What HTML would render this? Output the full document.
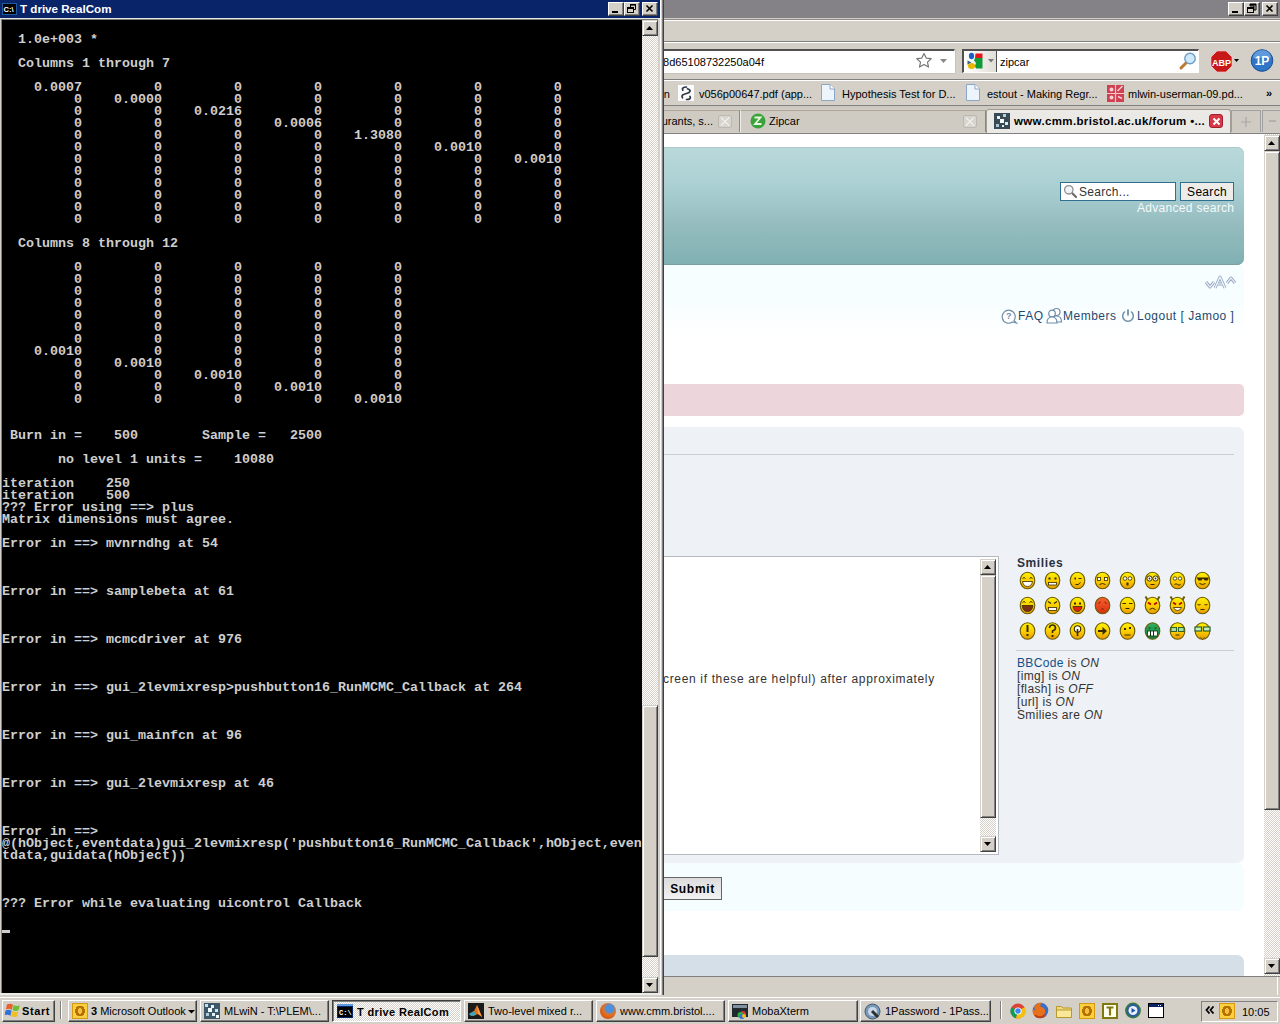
<!DOCTYPE html>
<html><head><meta charset="utf-8">
<style>
*{margin:0;padding:0;box-sizing:border-box}
html,body{width:1280px;height:1024px;overflow:hidden;background:#3a6ea5;font-family:"Liberation Sans",sans-serif}
.abs{position:absolute}
/* browser */
#br{position:absolute;left:0;top:0;width:1280px;height:995px;background:#d4d0c8}
#br .title{position:absolute;left:0;top:0;width:880px;height:18px;background:#808080}
/* console */
#con{position:absolute;left:0;top:0;width:664px;height:996px;background:#d4d0c8}
#con .title{position:absolute;left:0;top:0;width:660px;height:18px;background:#0a246a}
#con .ttext{position:absolute;left:20px;top:2px;font:bold 11.6px "Liberation Sans",sans-serif;color:#fff;line-height:14px}
.wbtn{position:absolute;top:2px;width:16px;height:14px;background:#d4d0c8;border-top:1px solid #fff;border-left:1px solid #fff;border-right:1px solid #404040;border-bottom:1px solid #404040;box-shadow:inset -1px -1px 0 #808080}
#screen{position:absolute;left:2px;top:20px;width:640px;height:973px;background:#000;overflow:hidden}
#screen pre{position:absolute;left:0;top:2px;font:bold 13.333px/12px "Liberation Mono",monospace;color:#cecece;white-space:pre}
.sb{position:absolute;background-color:#f4f3ee;background-image:repeating-conic-gradient(#d4d0c8 0 25%,#fff 0 50%);background-size:2px 2px}
.sbb{position:absolute;width:16px;height:16px;background:#d4d0c8;border-top:1px solid #d4d0c8;border-left:1px solid #d4d0c8;border-right:1px solid #404040;border-bottom:1px solid #404040;box-shadow:inset 1px 1px 0 #fff,inset -1px -1px 0 #808080}
/* taskbar */
#tb{position:absolute;left:0;top:995px;width:1280px;height:29px;background:#d4d0c8}
.tbtn{position:absolute;top:5px;height:22px;background:#d4d0c8;border-top:1px solid #fff;border-left:1px solid #fff;border-right:1px solid #404040;border-bottom:1px solid #404040;box-shadow:inset -1px -1px 0 #808080;font:11px/14px "Liberation Sans",sans-serif;color:#000;white-space:nowrap;overflow:hidden}
.bm{font:11px/14px "Liberation Sans",sans-serif;color:#000;white-space:nowrap}
.tab{top:110px;height:22px;background:#cfcbc3;border-top:1px solid #a8a49c;border-left:1px solid #f0eeea;border-right:1px solid #8c8880;font:11px/14px "Liberation Sans",sans-serif;color:#000;white-space:nowrap}
.tabsel{top:109px;height:25px;background:#ebe9e5;border:1px solid #a09c94;border-bottom:none;border-radius:3px 3px 0 0;font:11px/14px "Liberation Sans",sans-serif;color:#000;white-space:nowrap}
.tclose{position:absolute;top:4px;width:14px;height:13px;border:1px solid #bdb9b1;border-radius:2px;background:#d8d5ce}
.tclose::after{content:"";position:absolute;left:2px;top:1px;width:8px;height:9px;background:linear-gradient(45deg,transparent 42%,#eeece8 42%,#eeece8 58%,transparent 58%),linear-gradient(-45deg,transparent 42%,#eeece8 42%,#eeece8 58%,transparent 58%)}
.nav{font:12px/16px "Liberation Sans",sans-serif;color:#1f4a6e;white-space:nowrap;letter-spacing:.5px}
.tbtn.sel{background-color:#eae8e4;background-image:repeating-conic-gradient(#d4d0c8 0 25%,#fff 0 50%);background-size:2px 2px;border-top:1px solid #404040;border-left:1px solid #404040;border-right:1px solid #fff;border-bottom:1px solid #fff;box-shadow:inset 1px 1px 0 #808080}
.ol{width:16px;height:16px;background:radial-gradient(ellipse 45% 50% at 50% 50%,#f0c040 0 38%,#b87000 40% 75%,#f8d040 78%),linear-gradient(#fbe070,#e8a810);border:1px solid #d89810}
.ff{width:16px;height:16px;border-radius:50%;background:radial-gradient(circle at 60% 35%,#4a90e0 0 25%,#e8701a 45%,#b84010 100%)}
</style></head><body>

<div id="br">
  <div class="abs" style="left:0;top:0;width:1280px;height:18px;background:#848187"></div>
  <div class="wbtn" style="left:1228px"><svg width="14" height="12" class="abs" style="left:0;top:0"><rect x="3" y="8" width="6" height="2" fill="#000"/></svg></div>
  <div class="wbtn" style="left:1244px"><svg width="14" height="12" class="abs" style="left:0;top:0"><path d="M5 1h6v6h-2M5 1v2h4v4" fill="none" stroke="#000" stroke-width="1"/><rect x="5" y="1" width="6" height="1.6" fill="#000"/><rect x="2.5" y="4.5" width="6" height="5" fill="none" stroke="#000"/><rect x="2" y="4" width="7" height="2" fill="#000"/></svg></div>
  <div class="wbtn" style="left:1262px"><svg width="14" height="12" class="abs" style="left:0;top:0"><path d="M3.5 2.5l6 6M9.5 2.5l-6 6" stroke="#000" stroke-width="1.6"/></svg></div>
  <div class="abs" style="left:0;top:18px;width:1280px;height:1px;background:#d4d0c8"></div>
  <div class="abs" style="left:0;top:19px;width:1280px;height:1px;background:#8c8986"></div>
  <div class="abs" style="left:0;top:20px;width:1280px;height:1px;background:#fff"></div>
  <div class="abs" style="left:0;top:41px;width:1280px;height:1px;background:#808080"></div>
  <div class="abs" style="left:0;top:42px;width:1280px;height:1px;background:#fff"></div>
  <!-- url bar -->
  <div class="abs" style="left:600px;top:49px;width:355px;height:24px;background:#fff;border-top:2px solid #505050;border-bottom:1px solid #fff;border-right:1px solid #fff;box-shadow:0 1px 0 #c8c4bc,1px 0 0 #c8c4bc"></div>
  <div class="abs" style="left:400px;top:55px;font:11px/14px 'Liberation Sans',sans-serif;color:#000;width:364px;text-align:right">t=7ba6c63d06e1bb8d65108732250a04f</div>
  <svg class="abs" style="left:915px;top:52px" width="18" height="18"><path d="M9 1.5l2.2 4.6 5 .6-3.7 3.4 1 5-4.5-2.5-4.5 2.5 1-5L1.8 6.7l5-.6z" fill="#fff" stroke="#777" stroke-width="1.2" stroke-linejoin="round"/></svg>
  <svg class="abs" style="left:940px;top:59px" width="8" height="5"><path d="M0 0h7l-3.5 4z" fill="#888"/></svg>
  <!-- search bar -->
  <div class="abs" style="left:962px;top:49px;width:237px;height:24px;background:#fff;border-top:2px solid #505050;border-left:2px solid #505050;border-bottom:1px solid #fff;border-right:1px solid #fff"></div>
  <div class="abs" style="left:964px;top:51px;width:33px;height:21px;background:linear-gradient(90deg,#fff,#e0ded8);border-right:1px solid #505050"></div>
  <svg class="abs" style="left:966px;top:52px" width="20" height="18"><ellipse cx="5.5" cy="4" rx="2.6" ry="3.3" fill="#1a5fc8"/><path d="M1.5 8.5l4 2-4 2.2z" fill="#2d5f8a"/><ellipse cx="5.5" cy="14" rx="3.6" ry="3" fill="#e8b800"/><path d="M9.5 1.5h7v4.5h-7.5z" fill="#e8141c"/><path d="M9 6h7.5v10.5h-6.5l-1-2.5 1-3-2-2.5z" fill="#0e9a36"/></svg>
  <svg class="abs" style="left:988px;top:59px" width="7" height="5"><path d="M0 0h6l-3 3.5z" fill="#777"/></svg>
  <div class="abs" style="left:1000px;top:55px;font:11px/14px 'Liberation Sans',sans-serif;color:#000">zipcar</div>
  <svg class="abs" style="left:1178px;top:51px" width="20" height="20"><path d="M3 17l5-5" stroke="#c07830" stroke-width="3" stroke-linecap="round"/><circle cx="12" cy="7.5" r="5.2" fill="#cfe8fa" stroke="#6d9cc4" stroke-width="1.4"/></svg>
  <!-- ABP + 1P -->
  <svg class="abs" style="left:1210px;top:50px" width="23" height="23"><path d="M7 .8h9l6.2 6.2v9L16 22.2H7L.8 16V7z" fill="#c81818" stroke="#f0d8d8" stroke-width="1"/><text x="11.5" y="15.5" text-anchor="middle" font-family="Liberation Sans" font-weight="bold" font-size="9" fill="#fff">ABP</text></svg>
  <svg class="abs" style="left:1234px;top:59px" width="6" height="4"><path d="M0 0h5l-2.5 3z" fill="#000"/></svg>
  <svg class="abs" style="left:1250px;top:49px" width="24" height="23"><circle cx="12" cy="11.5" r="10.8" fill="#2f76c8" stroke="#1b4f94" stroke-width="1"/><path d="M3 9a9 8 0 0 1 18 0z" fill="#7fb3ea" opacity=".6"/><text x="12" y="16" text-anchor="middle" font-family="Liberation Sans" font-weight="bold" font-size="12" fill="#fff">1P</text></svg>
  <div class="abs" style="left:0;top:79px;width:1280px;height:1px;background:#808080"></div>
  <div class="abs" style="left:0;top:80px;width:1280px;height:1px;background:#fff"></div>
  <!-- bookmarks -->
  <div class="abs bm" style="left:500px;top:87px;width:170px;text-align:right">Summary Statistics Design</div>
  <svg class="abs" style="left:678px;top:85px" width="16" height="16"><rect width="16" height="16" fill="#fbfcfe"/><path d="M8.5 2C5.5 2 3.5 3.2 4.8 5.2M9.5 3.8C13.5 5 12.5 7.5 8.5 8.5S3 10.5 4.5 12.8M8.5 14.5C12 14.5 13 13 12 11.5" fill="none" stroke="#2c3440" stroke-width="1.7" stroke-linecap="round"/></svg>
  <div class="abs bm" style="left:699px;top:87px">v056p00647.pdf (app...</div>
  <svg class="abs" style="left:821px;top:84px" width="14" height="17"><path d="M.5 .5h8.5l4.5 4.5v11.5H.5z" fill="#eef4fc" stroke="#8aa6c8"/><path d="M9 .5v4.5h4.5" fill="#fff" stroke="#8aa6c8"/></svg>
  <div class="abs bm" style="left:842px;top:87px">Hypothesis Test for D...</div>
  <svg class="abs" style="left:966px;top:84px" width="14" height="17"><path d="M.5 .5h8.5l4.5 4.5v11.5H.5z" fill="#eef4fc" stroke="#8aa6c8"/><path d="M9 .5v4.5h4.5" fill="#fff" stroke="#8aa6c8"/></svg>
  <div class="abs bm" style="left:987px;top:87px">estout - Making Regr...</div>
  <svg class="abs" style="left:1107px;top:85px" width="17" height="17"><rect width="17" height="17" fill="#d04050"/><path d="M8.5 0v17M0 8.5h17" stroke="#f4c8cc" stroke-width="1.2"/><circle cx="4.5" cy="4.5" r="2" fill="#f6d0d4"/><circle cx="4.5" cy="12.5" r="2" fill="#f6d0d4"/><path d="M10.5 6l5-5M11 11.5l4 2" stroke="#f6d0d4" stroke-width="1.5"/></svg>
  <div class="abs bm" style="left:1128px;top:87px">mlwin-userman-09.pd...</div>
  <div class="abs" style="left:1266px;top:86px;font:bold 11px/14px 'Liberation Sans',sans-serif;color:#000">&#187;</div>
  <div class="abs" style="left:0;top:105px;width:1280px;height:1px;background:#808080"></div>
  <div class="abs" style="left:0;top:106px;width:1280px;height:3px;background:#cdc9c1"></div>
  <!-- tabs -->
  <div class="abs tab" style="left:500px;width:240px"><span style="position:absolute;right:26px;top:3px">Restaurants, s...</span><div class="tclose" style="left:217px"></div></div>
  <div class="abs tab" style="left:740px;width:246px"><svg class="abs" style="left:9px;top:2px" width="16" height="16"><circle cx="8" cy="8" r="7.5" fill="#3aa43a"/><path d="M4.5 4.5h6l-5.5 6.5h6.5" fill="none" stroke="#e8f8e0" stroke-width="1.8"/></svg><span style="position:absolute;left:28px;top:3px">Zipcar</span><div class="tclose" style="left:222px"></div></div>
  <div class="abs tabsel" style="left:986px;width:245px"><svg class="abs" style="left:7px;top:3px" width="16" height="16"><rect width="16" height="16" fill="#3a4a54"/><rect x="3" y="3" width="3" height="3" fill="#e8f4f8"/><rect x="9" y="1" width="3" height="3" fill="#b8d0dc"/><rect x="6" y="6" width="4" height="4" fill="#f4fcff"/><rect x="11" y="9" width="3" height="3" fill="#d8ecf4"/><rect x="2" y="11" width="3" height="3" fill="#a8c4d4"/><rect x="8" y="12" width="2" height="2" fill="#e0f0f8"/></svg><span style="position:absolute;left:27px;top:4px;font-weight:bold;font-size:11.5px;letter-spacing:.35px">www.cmm.bristol.ac.uk/forum &#8226;...</span><div class="abs" style="left:222px;top:4px;width:14px;height:14px;background:#d83848;border:1px solid #a02030;border-radius:3px"><svg class="abs" style="left:2px;top:2px" width="10" height="10"><path d="M1.5 1.5l6 6M7.5 1.5l-6 6" stroke="#fff" stroke-width="2"/></svg></div></div>
  <div class="abs" style="left:1231px;top:110px;width:30px;height:22px;background:#cfcbc3;border:1px solid #a0a0a0;border-bottom:none"><svg class="abs" style="left:8px;top:5px" width="12" height="12"><path d="M6 1v10M1 6h10" stroke="#a8a8a8" stroke-width="1.2"/></svg></div>
  <div class="abs" style="left:1262px;top:110px;width:20px;height:22px;background:#cfcbc3;border:1px solid #a0a0a0;border-bottom:none"><svg class="abs" style="left:6px;top:9px" width="8" height="3"><path d="M0 1h7" stroke="#a0a0a0" stroke-width="1.2"/></svg></div>
  <div class="abs" style="left:0;top:133px;width:1280px;height:1px;background:#808080"></div>
  <!-- content -->
  <div class="abs" style="left:0;top:134px;width:1264px;height:842px;background:#fff;overflow:hidden" id="page"></div>
  <!-- header -->
  <div class="abs" style="left:400px;top:147px;width:844px;height:118px;border-radius:7px;background:linear-gradient(#b9d8da 0%,#afd3d5 25%,#a4c9cd 45%,#95bcbe 65%,#89b6b8 85%,#7fb0b2 100%);box-shadow:inset 0 1px 0 #b0cacc,inset 0 -1px 0 #7aa0a2"></div>
  <div class="abs" style="left:1060px;top:182px;width:116px;height:19px;background:#fff;border:1px solid #2f6f8f"></div>
  <svg class="abs" style="left:1063px;top:184px" width="15" height="15"><path d="M8.5 8.5l4.5 4.5" stroke="#707070" stroke-width="2.4" stroke-linecap="round"/><circle cx="5.8" cy="5.8" r="4.2" fill="#f0f4f8" stroke="#909090" stroke-width="1.3"/></svg>
  <div class="abs" style="left:1079px;top:185px;font:12px/14px 'Liberation Sans',sans-serif;color:#333;letter-spacing:.3px">Search...</div>
  <div class="abs" style="left:1180px;top:182px;width:54px;height:19px;background:#eeece8;border:1px solid #2f6f8f;font:12px/18px 'Liberation Sans',sans-serif;color:#000;text-align:center;letter-spacing:.3px">Search</div>
  <div class="abs" style="left:1137px;top:201px;font:12px/14px 'Liberation Sans',sans-serif;color:#f4fafa;letter-spacing:.3px">Advanced search</div>
  <!-- navbar -->
  <div class="abs" style="left:400px;top:265px;width:844px;height:70px;background:linear-gradient(#f6feff,#f8feff 60%,#fff)"></div>
  <svg class="abs" style="left:1200px;top:272px" width="40" height="20"><g fill="none" stroke="#98aac4" stroke-width="3" stroke-linejoin="round"><path d="M6 10l4 5 4-5M15 16l5-11 5 11M17.5 12h5M27 11l4-5 4 5"/></g><g fill="none" stroke="#f4f8fc" stroke-width="1.2" stroke-linejoin="round"><path d="M6 10l4 5 4-5M15 16l5-11 5 11M17.5 12h5M27 11l4-5 4 5"/></g></svg>
  <svg class="abs" style="left:1001px;top:307px" width="17" height="17"><path d="M13 13.5l2.5 2.5-4-1A6.5 6.5 0 1 1 13 13.5z" fill="#fff" stroke="#6f8ea8" stroke-width="1.2"/><text x="7.8" y="11.5" text-anchor="middle" font-family="Liberation Sans" font-weight="bold" font-size="9" fill="#6f8ea8">?</text></svg>
  <div class="abs nav" style="left:1018px;top:308px">FAQ</div>
  <svg class="abs" style="left:1046px;top:307px" width="17" height="17"><circle cx="10.5" cy="5" r="3.5" fill="#fff" stroke="#6f8ea8" stroke-width="1.2"/><path d="M5.5 15c0-4 2-6 5-6s5 2 5 6z" fill="#fff" stroke="#6f8ea8" stroke-width="1.2"/><circle cx="6" cy="6.5" r="3.3" fill="#fff" stroke="#6f8ea8" stroke-width="1.2"/><path d="M1 16c0-4 2-6 5-6s5 2 5 6z" fill="#fff" stroke="#6f8ea8" stroke-width="1.2"/></svg>
  <div class="abs nav" style="left:1063px;top:308px">Members</div>
  <svg class="abs" style="left:1121px;top:308px" width="14" height="15"><path d="M4 3.5A5.3 5.3 0 1 0 10 3.5" fill="none" stroke="#6f8ea8" stroke-width="1.5"/><path d="M7 1.5v6" stroke="#6f8ea8" stroke-width="1.8"/></svg>
  <div class="abs nav" style="left:1137px;top:308px">Logout [ Jamoo ]</div>
  <!-- pink bar -->
  <div class="abs" style="left:400px;top:384px;width:844px;height:32px;border-radius:5px;background:#ecd6dc"></div>
  <!-- panel -->
  <div class="abs" style="left:400px;top:427px;width:844px;height:436px;border-radius:7px;background:#eef1f5"></div>
  <div class="abs" style="left:400px;top:454px;width:834px;height:1px;background:#c9ced4"></div>
  <!-- textarea -->
  <div class="abs" style="left:400px;top:556px;width:599px;height:299px;background:#fff;border:1px solid #b4bac0"></div>
  <div class="abs" style="left:663px;top:672px;font:12px/14px 'Liberation Sans',sans-serif;color:#333;letter-spacing:.66px">creen if these are helpful) after approximately</div>
  <div class="sb" style="left:980px;top:559px;width:16px;height:293px"></div>
  <div class="sbb" style="left:980px;top:559px"><svg class="abs" style="left:3px;top:5px" width="8" height="5"><path d="M0 4h7L3.5 0z" fill="#000"/></svg></div>
  <div class="sbb" style="left:980px;top:575px;height:243px"></div>
  <div class="sbb" style="left:980px;top:836px"><svg class="abs" style="left:3px;top:5px" width="8" height="5"><path d="M0 0h7L3.5 4z" fill="#000"/></svg></div>
  <!-- smilies -->
  <div class="abs" style="left:1017px;top:556px;font:bold 12px/14px 'Liberation Sans',sans-serif;color:#28313f;letter-spacing:.6px">Smilies</div>
  <svg class="abs" style="left:1015px;top:565px" width="200" height="80"><defs><linearGradient id="yg" x1="0" y1="0" x2="0" y2="1"><stop offset="0" stop-color="#fff200"/><stop offset=".6" stop-color="#f8c800"/><stop offset="1" stop-color="#e89800"/></linearGradient><linearGradient id="rg" x1="0" y1="0" x2="0" y2="1"><stop offset="0" stop-color="#f86030"/><stop offset="1" stop-color="#d83010"/></linearGradient><linearGradient id="gg" x1="0" y1="0" x2="0" y2="1"><stop offset="0" stop-color="#30b060"/><stop offset="1" stop-color="#108040"/></linearGradient></defs><ellipse cx="12.5" cy="15.5" rx="7.3" ry="8.2" fill="url(#yg)" stroke="#6a5a00" stroke-width="1.1"/><path d="M7.5 13.5q1.5-2 3 0M14.5 13.5q1.5-2 3 0" stroke="#3a2a00" fill="none"/><path d="M7.5 16.5h10q-1 5-5 5t-5-5z" fill="#fff" stroke="#3a2a00" stroke-width=".8"/><ellipse cx="37.5" cy="15.5" rx="7.3" ry="8.2" fill="url(#yg)" stroke="#6a5a00" stroke-width="1.1"/><rect x="33.5" y="12.5" width="2" height="2" fill="#3a2a00"/><rect x="39.5" y="12.5" width="2" height="2" fill="#3a2a00"/><rect x="33.5" y="17.5" width="8" height="2.5" fill="#fff" stroke="#3a2a00" stroke-width=".8"/><ellipse cx="62.5" cy="15.5" rx="7.3" ry="8.2" fill="url(#yg)" stroke="#6a5a00" stroke-width="1.1"/><rect x="59.5" y="12.5" width="1.5" height="2" fill="#3a2a00"/><path d="M63.5 13.5h3M60.5 19.5q3 1 5-2" stroke="#3a2a00" fill="none"/><ellipse cx="87.5" cy="15.5" rx="7.3" ry="8.2" fill="url(#yg)" stroke="#6a5a00" stroke-width="1.1"/><rect x="82.5" y="12.5" width="3" height="3" fill="#fff" stroke="#3a2a00" stroke-width=".8"/><rect x="89.5" y="12.5" width="3" height="3" fill="#fff" stroke="#3a2a00" stroke-width=".8"/><path d="M84.5 19.5q3-2 6 0" stroke="#3a2a00" fill="none"/><ellipse cx="112.5" cy="15.5" rx="7.3" ry="8.2" fill="url(#yg)" stroke="#6a5a00" stroke-width="1.1"/><circle cx="110.0" cy="13.5" r="1.8" fill="#fff" stroke="#3a2a00" stroke-width=".8"/><circle cx="115.0" cy="13.5" r="1.8" fill="#fff" stroke="#3a2a00" stroke-width=".8"/><rect x="111.5" y="17.5" width="2" height="3" fill="#3a2a00"/><ellipse cx="137.5" cy="15.5" rx="7.3" ry="8.2" fill="url(#yg)" stroke="#6a5a00" stroke-width="1.1"/><circle cx="134.5" cy="13.5" r="2.6" fill="#fff" stroke="#3a2a00"/><circle cx="140.5" cy="13.5" r="2.6" fill="#fff" stroke="#3a2a00"/><circle cx="134.5" cy="13.5" r=".9" fill="#3a2a00"/><circle cx="140.5" cy="13.5" r=".9" fill="#3a2a00"/><path d="M135.5 19.5h4" stroke="#3a2a00"/><ellipse cx="162.5" cy="15.5" rx="7.3" ry="8.2" fill="url(#yg)" stroke="#6a5a00" stroke-width="1.1"/><circle cx="160.0" cy="13.5" r="1.7" fill="#fff" stroke="#3a2a00" stroke-width=".8"/><circle cx="165.0" cy="13.5" r="1.7" fill="#fff" stroke="#3a2a00" stroke-width=".8"/><path d="M159.5 19.5q1.5-1.5 3 0t3 0" stroke="#3a2a00" fill="none"/><ellipse cx="187.5" cy="15.5" rx="7.3" ry="8.2" fill="url(#yg)" stroke="#6a5a00" stroke-width="1.1"/><path d="M181.5 12.5h12v1.5l-1 1.5h-3l-1-1.5h-1l-1 1.5h-3l-1-1.5z" fill="#3a2a00"/><path d="M184.5 18.5q3 2 6 0" stroke="#3a2a00" fill="none"/><ellipse cx="12.5" cy="40.5" rx="7.3" ry="8.2" fill="url(#yg)" stroke="#6a5a00" stroke-width="1.1"/><path d="M7.5 37.5q1.5-2 3 0M14.5 37.5q1.5-2 3 0" stroke="#3a2a00" fill="none"/><path d="M7.0 40.5h11q-1 6-5.5 6t-5.5-6z" fill="#7a3018" stroke="#3a2a00" stroke-width=".8"/><ellipse cx="37.5" cy="40.5" rx="7.3" ry="8.2" fill="url(#yg)" stroke="#6a5a00" stroke-width="1.1"/><path d="M33.0 36.5l3 2M42.0 36.5l-3 2" stroke="#3a2a00" stroke-width="1.3"/><rect x="33.5" y="42.5" width="8" height="3" fill="#fff" stroke="#3a2a00" stroke-width=".8"/><ellipse cx="62.5" cy="40.5" rx="7.3" ry="8.2" fill="url(#yg)" stroke="#6a5a00" stroke-width="1.1"/><rect x="59.0" y="37.5" width="2" height="2" fill="#3a2a00"/><rect x="64.0" y="37.5" width="2" height="2" fill="#3a2a00"/><path d="M58.0 41.5h9q-1 5-4.5 5t-4.5-5z" fill="#e02010" stroke="#3a2a00" stroke-width=".8"/><ellipse cx="87.5" cy="40.5" rx="7.3" ry="8.2" fill="url(#rg)" stroke="#6a5a00" stroke-width="1.1"/><path d="M83.5 38.5l2-1.5M91.5 38.5l-2-1.5" stroke="#602000"/><rect x="86.5" y="43.5" width="2" height="1" fill="#602000"/><ellipse cx="112.5" cy="40.5" rx="7.3" ry="8.2" fill="url(#yg)" stroke="#6a5a00" stroke-width="1.1"/><path d="M107.5 38.5h3.5M114.0 38.5h3.5M110.5 43.5h4" stroke="#3a2a00"/><path d="M130.5 31.5l3 5M144.5 31.5l-3 5" stroke="#6a5a00" stroke-width="2"/><ellipse cx="137.5" cy="40.5" rx="7.3" ry="8.2" fill="url(#yg)" stroke="#6a5a00" stroke-width="1.1"/><path d="M133.0 37.5l3 2M142.0 37.5l-3 2" stroke="#c00000" stroke-width="1.6"/><path d="M134.5 44.5q3-2.5 6 0" stroke="#3a2a00" fill="none"/><path d="M155.5 31.5l3 5M169.5 31.5l-3 5" stroke="#6a5a00" stroke-width="2"/><ellipse cx="162.5" cy="40.5" rx="7.3" ry="8.2" fill="url(#yg)" stroke="#6a5a00" stroke-width="1.1"/><path d="M158.0 37.5l3 2M167.0 37.5l-3 2" stroke="#c00000" stroke-width="1.6"/><path d="M158.5 42.5h8q-1 3-4 3t-4-3z" fill="#fff" stroke="#3a2a00" stroke-width=".8"/><ellipse cx="187.5" cy="40.5" rx="7.3" ry="8.2" fill="url(#yg)" stroke="#6a5a00" stroke-width="1.1"/><path d="M182.5 39.5q1.5 1 3 0M189.5 39.5q1.5 1 3 0M185.5 44.5h4" stroke="#3a2a00" fill="none"/><ellipse cx="12.5" cy="66" rx="7.3" ry="8.2" fill="url(#yg)" stroke="#6a5a00" stroke-width="1.1"/><rect x="11.5" y="60" width="2" height="7" fill="#3a2a00"/><rect x="11.5" y="69" width="2" height="2" fill="#3a2a00"/><ellipse cx="37.5" cy="66" rx="7.3" ry="8.2" fill="url(#yg)" stroke="#6a5a00" stroke-width="1.1"/><path d="M34.5 63q0-3 3-3t3 3q0 2-3 3v2" stroke="#3a2a00" stroke-width="1.6" fill="none"/><rect x="36.5" y="70" width="2" height="2" fill="#3a2a00"/><ellipse cx="62.5" cy="66" rx="7.3" ry="8.2" fill="url(#yg)" stroke="#6a5a00" stroke-width="1.1"/><circle cx="62.5" cy="64" r="3.2" fill="#fff" stroke="#3a2a00" stroke-width="1.1"/><path d="M62.5 64v7" stroke="#3a2a00" stroke-width="1.6"/><ellipse cx="87.5" cy="66" rx="7.3" ry="8.2" fill="url(#yg)" stroke="#6a5a00" stroke-width="1.1"/><path d="M83.0 65h4.5v-3l4.5 4-4.5 4v-3h-4.5z" fill="#3a2a00"/><ellipse cx="112.5" cy="66" rx="7.3" ry="8.2" fill="url(#yg)" stroke="#6a5a00" stroke-width="1.1"/><rect x="109.0" y="63" width="2" height="2" fill="#3a2a00"/><rect x="114.0" y="62" width="2" height="2" fill="#3a2a00"/><path d="M109.5 70h6" stroke="#3a2a00"/><ellipse cx="137.5" cy="66" rx="7.3" ry="8.2" fill="url(#gg)" stroke="#6a5a00" stroke-width="1.1"/><rect x="132.5" y="66" width="10" height="5" fill="#fff" stroke="#103010" stroke-width=".8"/><path d="M135.5 66v5M138.5 66v5M133.5 63h2M139.5 63h2" stroke="#103010"/><ellipse cx="162.5" cy="66" rx="7.3" ry="8.2" fill="url(#yg)" stroke="#6a5a00" stroke-width="1.1"/><rect x="156.0" y="62.5" width="5.5" height="4" fill="#a0e0a0" stroke="#306030"/><rect x="163.5" y="62.5" width="5.5" height="4" fill="#a0e0a0" stroke="#306030"/><path d="M160.5 70h4" stroke="#3a2a00"/><ellipse cx="187.5" cy="66" rx="7.3" ry="8.2" fill="url(#yg)" stroke="#6a5a00" stroke-width="1.1"/><rect x="180.0" y="62" width="6.5" height="4" fill="#c0f0c0" stroke="#306030" stroke-width="1.2"/><rect x="188.5" y="62" width="6.5" height="4" fill="#c0f0c0" stroke="#306030" stroke-width="1.2"/><path d="M185.5 72l2 3 2-3" stroke="#806020" fill="none"/></svg>
  <div class="abs" style="left:1016px;top:650px;width:218px;height:1px;background:#c9ced4"></div>
  <div class="abs" style="left:1017px;top:657px;font:12px/13px 'Liberation Sans',sans-serif;color:#333;letter-spacing:.35px"><span style="color:#105289">BBCode</span> is <i>ON</i><br>[img] is <i>ON</i><br>[flash] is <i>OFF</i><br>[url] is <i>ON</i><br>Smilies are <i>ON</i></div>
  <!-- submit panel -->
  <div class="abs" style="left:400px;top:863px;width:844px;height:48px;border-radius:7px;background:#f5fdfe"></div>
  <div class="abs" style="left:400px;top:877px;width:322px;height:23px;background:linear-gradient(#dcdcdc,#f2f2f2);border:1px solid #666;font:bold 12px/23px 'Liberation Sans',sans-serif;color:#000;text-align:right;padding-right:6px;letter-spacing:.7px">Submit</div>
  <!-- bottom box -->
  <div class="abs" style="left:400px;top:955px;width:844px;height:40px;border-radius:7px;background:#d4dfe8"></div>
  <!-- page scrollbar -->
  <div class="sb" style="left:1264px;top:134px;width:16px;height:842px"></div>
  <div class="sbb" style="left:1264px;top:135px"><svg class="abs" style="left:3px;top:5px" width="8" height="5"><path d="M0 4h7L3.5 0z" fill="#000"/></svg></div>
  <div class="sbb" style="left:1264px;top:151px;height:659px"></div>
  <div class="sbb" style="left:1264px;top:958px"><svg class="abs" style="left:3px;top:5px" width="8" height="5"><path d="M0 0h7L3.5 4z" fill="#000"/></svg></div>
  <!-- status bar -->
  <div class="abs" style="left:0;top:976px;width:1280px;height:19px;background:#d4d0c8;border-top:1px solid #808080"></div>
  <div class="abs" style="left:1277px;top:977px;width:1px;height:18px;background:#fff"></div>
  <div class="abs" style="left:0;top:995px;width:1280px;height:1px;background:#fff"></div>
</div>

<div id="con">
  <div class="title">
    <svg class="abs" style="left:2px;top:3px" width="15" height="12"><rect x="0" y="0" width="15" height="12" fill="#1e5aa0"/><rect x="1" y="1" width="13" height="10" fill="#000"/><text x="1.5" y="9" font-family="Liberation Sans" font-weight="bold" font-size="7.5" fill="#fff">C:\</text></svg>
    <div class="ttext">T drive RealCom</div>
    <div class="wbtn" style="left:608px"><svg width="14" height="12" class="abs" style="left:0;top:0"><rect x="3" y="8" width="6" height="2" fill="#000"/></svg></div>
    <div class="wbtn" style="left:624px"><svg width="14" height="12" class="abs" style="left:0;top:0"><rect x="5" y="1" width="6" height="1.6" fill="#000"/><path d="M5.5 1v3M10.5 1v5.5H9" fill="none" stroke="#000"/><rect x="2.5" y="4.5" width="6" height="5" fill="none" stroke="#000"/><rect x="2" y="4" width="7" height="2" fill="#000"/></svg></div>
    <div class="wbtn" style="left:642px"><svg width="14" height="12" class="abs" style="left:0;top:0"><path d="M3.5 2.5l6 6M9.5 2.5l-6 6" stroke="#000" stroke-width="1.6"/></svg></div>
  </div>
  <div class="abs" style="left:0;top:18px;width:662px;height:1px;background:#e8e8e8"></div>
  <div class="abs" style="left:2px;top:19px;width:656px;height:1px;background:#7a7a70"></div>
  <div class="abs" style="left:1px;top:19px;width:1px;height:976px;background:#808080"></div>
  <div id="screen"><div class="abs" style="left:0;top:910px;width:8px;height:3px;background:#cecece"></div><pre>

  1.0e+003 *

  Columns 1 through 7

    0.0007         0         0         0         0         0         0
         0    0.0000         0         0         0         0         0
         0         0    0.0216         0         0         0         0
         0         0         0    0.0006         0         0         0
         0         0         0         0    1.3080         0         0
         0         0         0         0         0    0.0010         0
         0         0         0         0         0         0    0.0010
         0         0         0         0         0         0         0
         0         0         0         0         0         0         0
         0         0         0         0         0         0         0
         0         0         0         0         0         0         0
         0         0         0         0         0         0         0

  Columns 8 through 12

         0         0         0         0         0
         0         0         0         0         0
         0         0         0         0         0
         0         0         0         0         0
         0         0         0         0         0
         0         0         0         0         0
         0         0         0         0         0
    0.0010         0         0         0         0
         0    0.0010         0         0         0
         0         0    0.0010         0         0
         0         0         0    0.0010         0
         0         0         0         0    0.0010


 Burn in =    500        Sample =   2500

       no level 1 units =    10080

iteration    250
iteration    500
??? Error using ==&gt; plus
Matrix dimensions must agree.

Error in ==&gt; mvnrndhg at 54



Error in ==&gt; samplebeta at 61



Error in ==&gt; mcmcdriver at 976



Error in ==&gt; gui_2levmixresp&gt;pushbutton16_RunMCMC_Callback at 264



Error in ==&gt; gui_mainfcn at 96



Error in ==&gt; gui_2levmixresp at 46



Error in ==&gt;
@(hObject,eventdata)gui_2levmixresp('pushbutton16_RunMCMC_Callback',hObject,even
tdata,guidata(hObject))



??? Error while evaluating uicontrol Callback
</pre></div>
  <div class="sb" style="left:642px;top:20px;width:16px;height:973px"></div>
  <div class="sbb" style="left:642px;top:20px"><svg class="abs" style="left:3px;top:5px" width="8" height="5"><path d="M0 4h7L3.5 0z" fill="#000"/></svg></div>
  <div class="sbb" style="left:642px;top:705px;height:252px"></div>
  <div class="sbb" style="left:642px;top:977px"><svg class="abs" style="left:3px;top:5px" width="8" height="5"><path d="M0 0h7L3.5 4z" fill="#000"/></svg></div>
  <div class="abs" style="left:660px;top:0;width:1px;height:995px;background:#fff"></div>
  <div class="abs" style="left:0;top:993px;width:660px;height:2px;background:#ecebe8"></div>
  <div class="abs" style="left:662px;top:0;width:1px;height:996px;background:#808080"></div>
  <div class="abs" style="left:663px;top:0;width:1px;height:996px;background:#404040"></div>
</div>

<div id="tb">
  <div class="abs" style="left:0;top:2px;width:1280px;height:1px;background:#fff"></div>
  <div class="tbtn" style="left:2px;width:53px"><svg class="abs" style="left:2px;top:1px" width="17" height="16"><path d="M2 2.5c2-1 4-1 6 .3l-1.2 5c-2-1.2-4-1.2-6-.2z" fill="#e8602a"/><path d="M8.7 3c2 1.2 4 1.2 6 .3l-1.2 5c-2 .9-4 .9-6-.3z" fill="#6cc030"/><path d="M.6 8.6c2-1 4-1 6 .2l-1.2 5c-2-1.2-4-1.2-6-.2z" fill="#3070d8"/><path d="M7.3 9.1c2 1.2 4 1.2 6 .3l-1.2 5c-2 .9-4 .9-6-.3z" fill="#f0c020"/></svg><span class="abs" style="left:19px;top:3px;font:bold 11px/14px 'Liberation Sans',sans-serif;letter-spacing:.6px">Start</span></div>
  <div class="abs" style="left:60px;top:6px;width:2px;height:18px;border-left:1px solid #808080;border-right:1px solid #fff"></div>
  <div class="tbtn" style="left:68px;width:129px"><div class="abs ol" style="left:3px;top:2px"></div><span class="abs" style="left:22px;top:3px"><b>3</b> Microsoft Outlook</span><svg class="abs" style="left:119px;top:9px" width="7" height="4"><path d="M0 0h7l-3.5 3.5z" fill="#000"/></svg></div>
  <div class="tbtn" style="left:200px;width:129px"><svg class="abs" style="left:3px;top:2px" width="16" height="16"><rect width="16" height="16" fill="#3d5868"/><rect x="1" y="1" width="3" height="3" fill="#c8e0ec"/><rect x="7" y="2" width="3" height="3" fill="#e8f4fa"/><rect x="4" y="5" width="4" height="4" fill="#f4fcff"/><rect x="11" y="6" width="3" height="3" fill="#d0e4ee"/><rect x="2" y="10" width="3" height="3" fill="#b0ccd8"/><rect x="8" y="10" width="3" height="3" fill="#e0f0f8"/><rect x="12" y="12" width="3" height="3" fill="#f0f8fc"/></svg><span class="abs" style="left:23px;top:3px">MLwiN - T:\PLEM\...</span></div>
  <div class="tbtn sel" style="left:332px;width:129px"><svg class="abs" style="left:4px;top:3px" width="16" height="14"><rect width="16" height="14" fill="#0a246a"/><rect x="1" y="3" width="14" height="10" fill="#000"/><rect x="0" y="0" width="16" height="2" fill="#5a9ae0"/><text x="2" y="11" font-family="Liberation Mono" font-size="7" font-weight="bold" fill="#fff">C:\</text></svg><span class="abs" style="left:24px;top:4px;font-weight:bold;letter-spacing:.35px">T drive RealCom</span></div>
  <div class="tbtn" style="left:464px;width:129px"><svg class="abs" style="left:3px;top:2px" width="16" height="16"><rect width="16" height="16" fill="#1a1a1a"/><path d="M1 11l5-3 3-6 5 12-4-3-5 2z" fill="#e07020"/><path d="M1 11l5-3 2 4-5 1z" fill="#38a8c0"/><path d="M9 2l5 12-4-3z" fill="#f8a040"/></svg><span class="abs" style="left:23px;top:3px">Two-level mixed r...</span></div>
  <div class="tbtn" style="left:596px;width:129px"><div class="abs ff" style="left:3px;top:2px"></div><span class="abs" style="left:23px;top:3px">www.cmm.bristol....</span></div>
  <div class="tbtn" style="left:728px;width:130px"><svg class="abs" style="left:3px;top:2px" width="16" height="16"><rect x="0" y="1" width="16" height="13" fill="#202830"/><rect x="1" y="2" width="14" height="3" fill="#8090a0"/><circle cx="11" cy="11" r="3" fill="#e03030"/><circle cx="8.5" cy="12" r="3" fill="#30b040"/><circle cx="10" cy="13.5" r="2.5" fill="#3070e0"/><circle cx="12" cy="13" r="2" fill="#f0c020"/></svg><span class="abs" style="left:23px;top:3px">MobaXterm</span></div>
  <div class="tbtn" style="left:860px;width:131px"><svg class="abs" style="left:3px;top:2px" width="17" height="17"><circle cx="8.5" cy="8.5" r="7.5" fill="#7898b8" stroke="#405870"/><circle cx="8.5" cy="8.5" r="4.5" fill="#c8d8e8"/><path d="M8 8l6 6" stroke="#303030" stroke-width="3"/></svg><span class="abs" style="left:24px;top:3px">1Password - 1Pass...</span></div>
  <div class="abs" style="left:1000px;top:6px;width:2px;height:18px;border-left:1px solid #808080;border-right:1px solid #fff"></div>
  <svg class="abs" style="left:1010px;top:8px" width="16" height="16"><circle cx="8" cy="8" r="7.5" fill="#db4437"/><path d="M8 8L1.5 4.2A7.5 7.5 0 0 0 6 15.3z" fill="#0f9d58"/><path d="M8 8l6.5-3.8A7.5 7.5 0 0 1 6 15.3z" fill="#f4c20d"/><circle cx="8" cy="8" r="3.6" fill="#fff"/><circle cx="8" cy="8" r="2.7" fill="#4285f4"/></svg>
  <svg class="abs" style="left:1032px;top:7px" width="17" height="17"><circle cx="8.5" cy="8.5" r="7.8" fill="#3a6ec8"/><path d="M2 6c1-4 5-6 8-5-2 1-2 3-1 4 3 0 5 3 4 6-1 3-5 5-8 4-4-1-5-5-4-8 1 1 2 1 3 1z" fill="#e8701a"/><path d="M3 13c2 3 7 3 10 0" stroke="#c04010" stroke-width="2" fill="none"/></svg>
  <svg class="abs" style="left:1056px;top:9px" width="16" height="14"><path d="M.5 2.5h5l1.5 1.5h8.5v9.5H.5z" fill="#f0d878" stroke="#b89830"/><path d="M.5 6h15v7.5H.5z" fill="#f8e898" stroke="#b89830"/></svg>
  <div class="abs ol" style="left:1079px;top:8px"></div>
  <svg class="abs" style="left:1102px;top:8px" width="16" height="16"><rect x="1" y="1" width="14" height="14" fill="#fffff0" stroke="#807810" stroke-width="2"/><path d="M4.5 4.5h7M8 4.5v8" stroke="#807810" stroke-width="2.2"/></svg>
  <svg class="abs" style="left:1125px;top:7px" width="16" height="17"><circle cx="8" cy="8.5" r="7.2" fill="#2c5aa0" stroke="#3a7a40" stroke-width="1.4"/><circle cx="8" cy="8.5" r="4.5" fill="#e8f0fc"/><path d="M6.5 6v5l4-2.5z" fill="#2050a0"/></svg>
  <svg class="abs" style="left:1148px;top:8px" width="16" height="15"><rect x=".5" y=".5" width="15" height="14" fill="#fff" stroke="#000"/><rect x="1" y="1" width="14" height="3" fill="#0a246a"/><rect x="10" y="2" width="1" height="1" fill="#fff"/><rect x="12" y="2" width="1" height="1" fill="#fff"/></svg>
  <div class="abs" style="left:1201px;top:6px;width:77px;height:21px;border-top:1px solid #808080;border-left:1px solid #808080;border-bottom:1px solid #fff;border-right:1px solid #fff"></div>
  <svg class="abs" style="left:1205px;top:11px" width="10" height="8"><path d="M4.5 .5L1.5 4l3 3.5M8.5 .5L5.5 4l3 3.5" fill="none" stroke="#000" stroke-width="1.8"/></svg>
  <div class="abs ol" style="left:1219px;top:8px"></div>
  <div class="abs" style="left:1242px;top:10px;font:11px/14px 'Liberation Sans',sans-serif;color:#000">10:05</div>
</div>
</body></html>
